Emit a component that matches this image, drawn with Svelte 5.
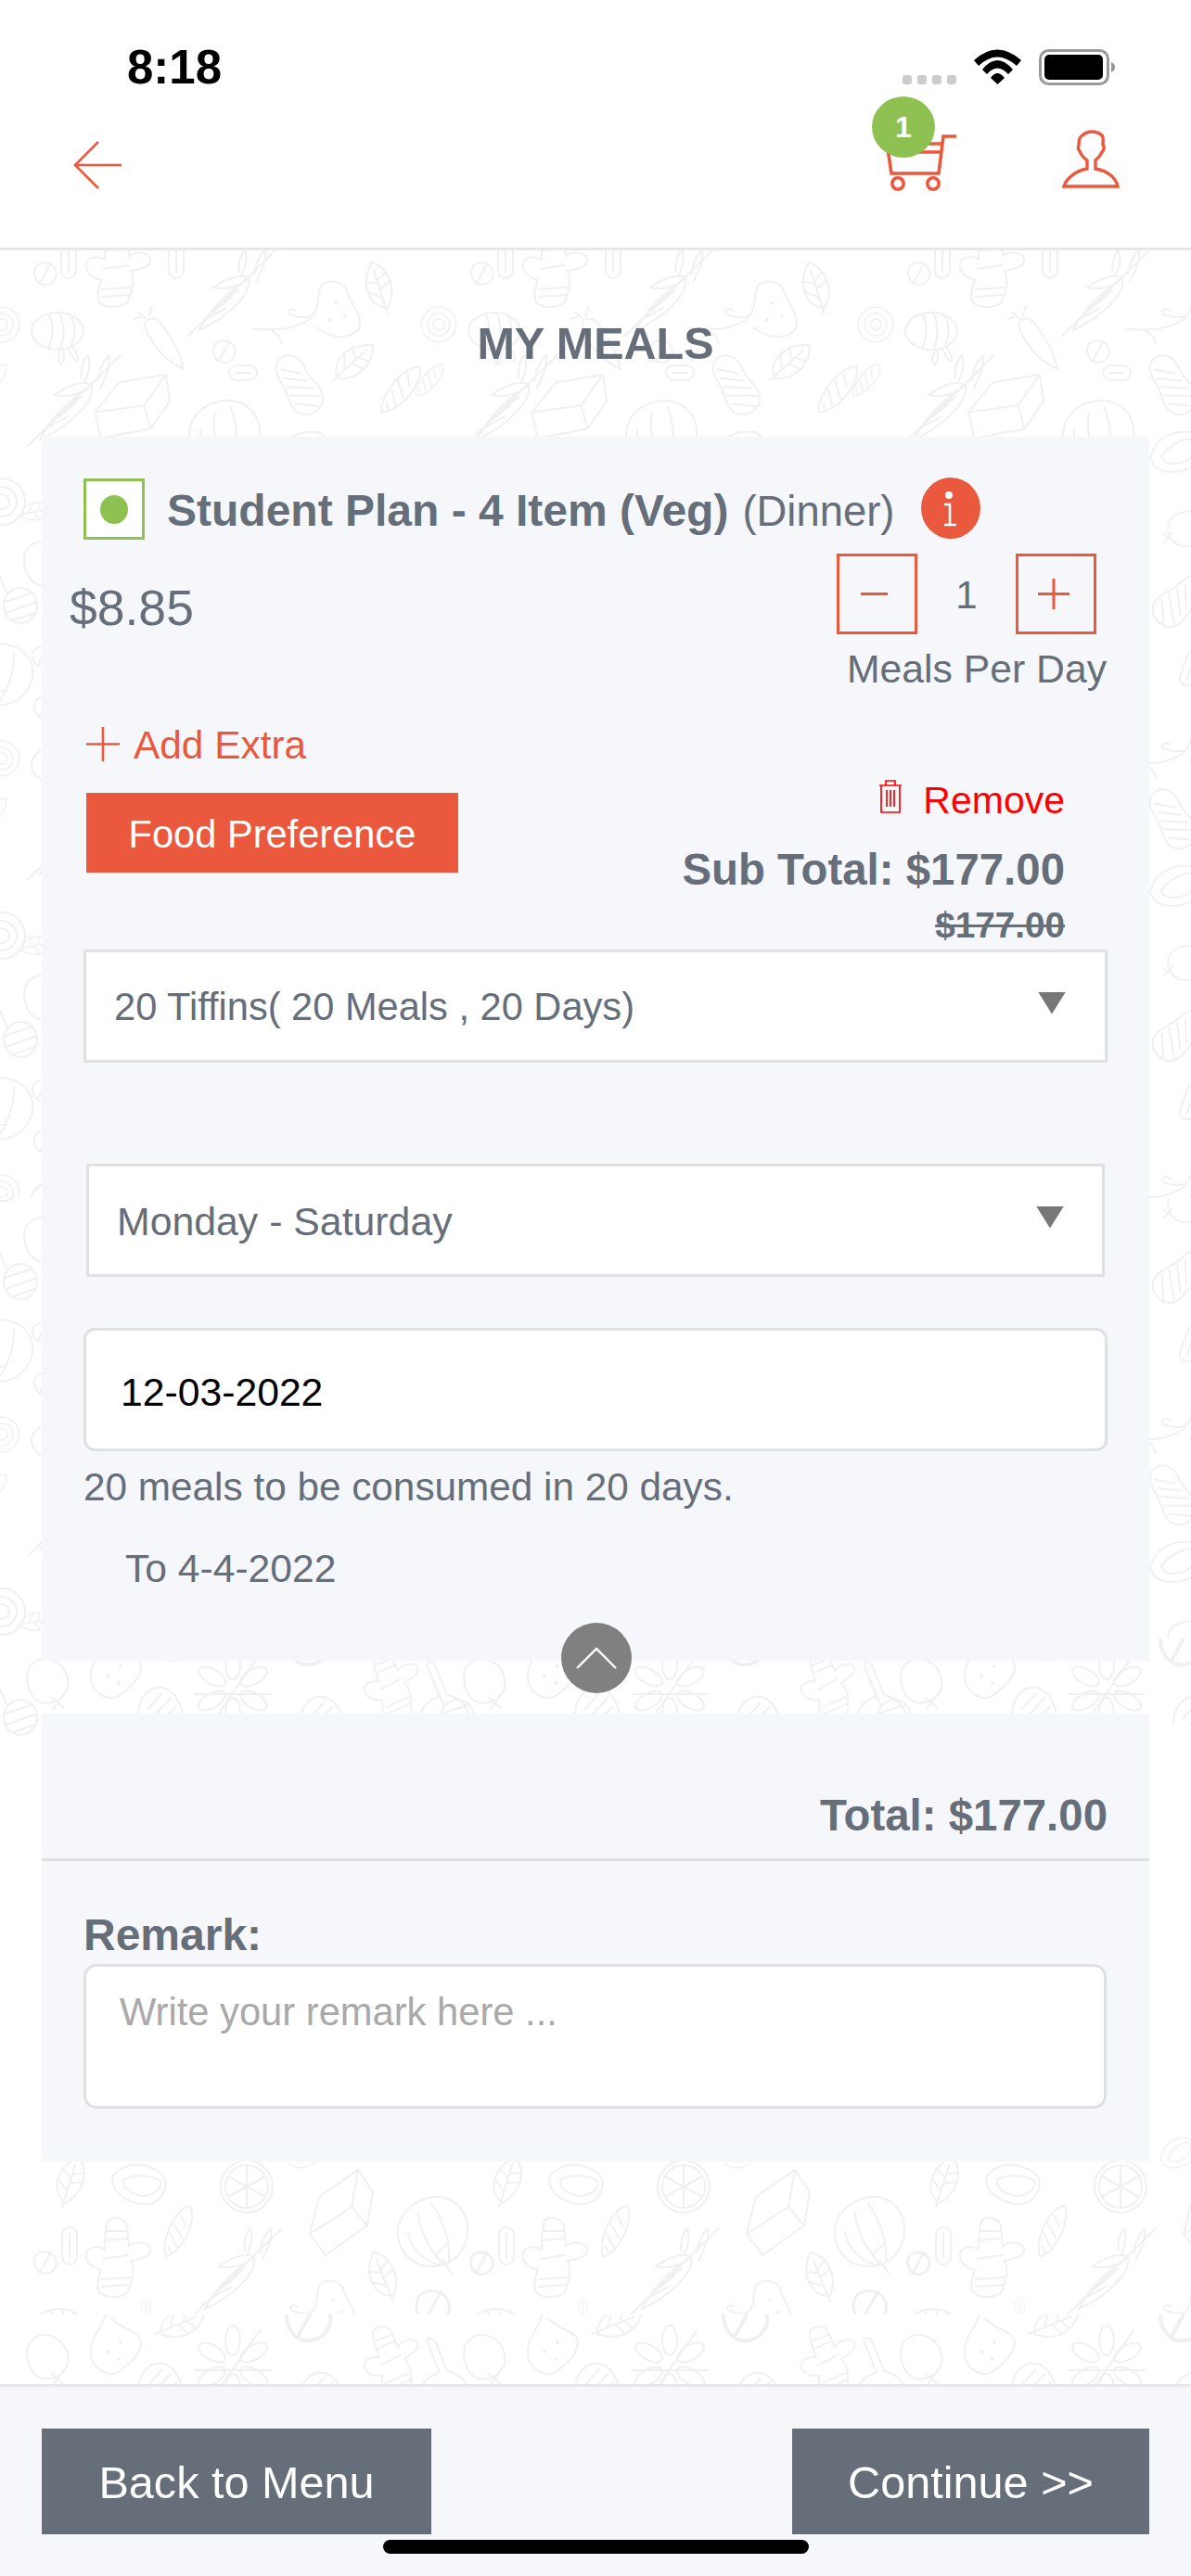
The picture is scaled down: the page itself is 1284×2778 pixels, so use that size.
<script>
  const xs = [-471, 0, 471, 942];
  const tileA = [
    ['ginger',127,292],['round',49,295],['bean',74,280],['bean',190,280],
    ['branch',250,316],['pear',362,335],['leaf',408,310,-15],
    ['striped',62,357],['carrot',176,372],['round',242,379],['pill',262,402],
    ['peanut',320,413,-20],['leaf',380,390,50],
    ['branch',80,432,0,1.05],['box',143,438,25],['pumpkin',242,470],
    ['lens',432,420,40],['lens',-8,410,40,.7],
    ['shell',328,488],['orange2',2,541],['leaf',38,551,80,.7],
    ['fig',48,607],['stem',22,653],['pumpkin',0,728,20,.9],
    ['round',46,708,0,.9],['fig',338,570,90,.85],['peanut',333,645,60],
    ['orange2',2,350,0,.75],['bean',342,720,20]
  ];
  const bottom = [
    ['leaf',546,2352,20],['shell',622,2356,30],['orange',737,2358],['shell',800,2322,-10,.7],
    ['box',839,2386],['pumpkin',938,2408,-15],['round',990,2441],['lens',663,2406,25,.95],
    ['bean',546,2422],['round',520,2440],['ginger',598,2438],
    ['branch',727,2450],['pear',830,2488,0,.9],['leaf',883,2455,-20],
    ['round',938,2488,0,1.5],['striped',535,2510],['leaf',628,2487,0,.4]
  ];
  const flowers = [
    ['fig',522,2541],['potato',595,2530],['leaf',665,2505,70],['flower',722,2550],
    ['acorn',642,2565,0],['acorn',816,2575,0],['round',804,2500,0,2],
    ['ginger',895,2548,-20,.9],['spoon',945,2555]
  ];
  const band = flowers.map(([k, x, y, r = 0, s = 1]) => [k, x, y - 729, r, s]);
  const place = (items, dys) => dys.flatMap((dy) => xs.flatMap((dx) => items.map(([k, x, y, r = 0, s = 1]) => ({
    k: '#' + k,
    t: `translate(${x + dx} ${y + dy}) rotate(${r}) scale(${s})`
  }))));
  const zoneA = place(tileA, [0, 468, 936]);
  const zoneB = place(tileA, [729, 1197]);
  const zoneC = place([...band, ['stem', 22, 1852], ...bottom], [0]);
  const zoneD = place(flowers, [0]);
</script>

<div class="app">
  <header class="top">
    <div class="status">
      <span class="time">8:18</span>
      <svg class="status-icons" viewBox="973 53 230 40" aria-hidden="true">
        <rect x="973" y="81" width="10" height="10" rx="3" fill="#ccc"/>
        <rect x="989" y="81" width="10" height="10" rx="3" fill="#ccc"/>
        <rect x="1005" y="81" width="10" height="10" rx="3" fill="#ccc"/>
        <rect x="1021" y="81" width="10" height="10" rx="3" fill="#ccc"/>
        <path d="M1050 65Q1075 42 1101 65L1096 71Q1075 52 1055 71Z"/>
        <path d="M1059 75Q1075 55 1092 75L1087 80Q1075 67 1064 80Z"/>
        <path d="M1068 84Q1075 74 1083 84L1075.5 91Z"/>
        <rect x="1121.5" y="54.5" width="73" height="36" rx="9" fill="none" stroke="#999" stroke-width="3"/>
        <rect x="1126" y="59" width="63" height="27" rx="5"/>
        <path d="M1198 67C1201 68 1202 70 1202 72.5C1202 75 1201 77 1198 78Z" fill="#999"/>
      </svg>
    </div>
    <nav class="nav">
      <svg class="back" viewBox="78 150 56 56" aria-hidden="true">
        <path d="M106 153L81 178L106 203M81 178H131"/>
      </svg>
      <div class="cart">
        <svg viewBox="940 104 92 102" aria-hidden="true">
          <path d="M1031 147H1017L1012 187H961L957 160M965 155H1015M965 164H1014"/>
          <circle cx="968" cy="198" r="6.2"/>
          <circle cx="1006" cy="198" r="6.2"/>
        </svg>
        <span class="badge">1</span>
      </div>
      <svg class="user" viewBox="1144 140 64 66" aria-hidden="true">
        <path d="M1147 201C1150 192 1160 184 1172 182V173C1168 170 1165 166 1164 163C1162 161 1162 158 1163 157C1163 150 1164 147 1167 146C1170 143 1174 142 1177 142C1182 142 1186 144 1188 146C1190 148 1189 152 1189 156C1191 159 1190 162 1188 164C1187 167 1184 170 1181 173V182C1193 184 1203 191 1205 201Z"/>
      </svg>
    </nav>
  </header>

  <main class="main">
    <svg class="doodles" viewBox="0 270 1284 2301" aria-hidden="true">
      <defs>
        <clipPath id="c1"><rect x="0" y="270" width="1284" height="1022"/></clipPath>
        <clipPath id="c2"><rect x="0" y="1292" width="1284" height="475"/></clipPath>
        <clipPath id="c3"><rect x="0" y="1767" width="1284" height="729"/></clipPath>
        <clipPath id="c4"><rect x="0" y="2496" width="1284" height="75"/></clipPath>
        <g id="ginger"><path d="M-10 -44C-4 -48 8 -46 10 -38L12 -16C20 -22 34 -20 35 -12C36 -4 24 -2 14 0C18 8 16 20 12 30C12 40 -12 42 -20 34C-24 26 -20 16 -18 10C-28 8 -36 0 -34 -8C-32 -16 -20 -16 -14 -12C-14 -22 -14 -36 -10 -44ZM-12 -32L10 -32M-13 -22L11 -24M-16 -2L12 -6M-18 20L14 18M-18 28L13 26"/></g>
        <g id="round"><path d="M-10 -8C-4 -14 8 -12 11 -4C14 6 6 13 -2 12C-10 11 -15 0 -10 -8ZM-6 10L6 -12"/></g>
        <g id="bean"><rect x="-8" y="-20" width="16" height="40" rx="8"/><path d="M0 -14V14"/></g>
        <g id="lens"><path d="M0 -32C14 -22 16 18 0 32C-14 18 -14 -22 0 -32ZM-6 -18L6 -8M-9 -6L9 6M-8 6L8 18M-3 20L4 26"/></g>
        <g id="branch"><path d="M-48 47L48 -47M-35 40C-22 14 0 -4 18 -16C22 0 -4 26 -35 40ZM18 -16C8 -22 -8 -14 -20 -6C-6 -2 10 -8 18 -16ZM24 -20C26 -34 32 -44 36 -46C38 -34 30 -20 26 -12M8 -22C6 -32 10 -44 14 -46C18 -36 14 -26 10 -18M-28 28L-6 16M-20 20L0 4M-12 12L8 -4"/></g>
        <g id="pear"><path d="M-15 -28C-6 -34 8 -32 12 -22C16 -6 26 0 26 14C26 24 12 30 0 28C-10 26 -16 22 -22 18M-15 -28C-22 -18 -16 -6 -24 4C-30 10 -44 6 -50 4C-54 0 -48 -4 -42 0M-90 20C-70 20 -50 24 -26 8M-70 21C-66 24 -60 26 -58 36"/><circle cx="0" cy="-8" r="1"/><circle cx="10" cy="6" r="1"/><circle cx="-6" cy="10" r="1"/></g>
        <g id="leaf"><path d="M0 -28C16 -18 20 6 4 24C-14 18 -20 -6 0 -28ZM0 -20L2 30M1 -8L12 -14M1 2L14 -4M2 12L-12 2M1 -4L-13 -10"/></g>
        <g id="striped"><ellipse rx="28" ry="20"/><path d="M-10 -19C-4 -8 -4 8 -10 18M2 -20C8 -8 8 8 2 20M14 -17C20 -6 20 6 14 17M4 20C0 28 0 34 4 36C8 32 8 26 6 20M12 18C14 26 18 32 22 32C24 28 18 20 16 16"/></g>
        <g id="carrot"><path d="M-18 -26C-10 -32 -4 -26 0 -20C8 -8 18 6 22 26C8 20 -8 6 -14 -8C-18 -14 -22 -22 -18 -26ZM-18 -28L-28 -36M-16 -30L-12 -42M-24 -30L-32 -28"/></g>
        <g id="pill"><rect x="-15" y="-8" width="30" height="16" rx="8"/><path d="M-8 0H8"/></g>
        <g id="peanut"><path d="M-10 -30C4 -36 14 -24 14 -10C14 0 22 8 22 20C22 34 4 40 -6 34C-16 28 -14 14 -14 4C-14 -4 -22 -22 -10 -30ZM-12 -20L8 -8M-12 -10L12 2M-12 0L16 12M-12 10L20 22M-10 20L14 32"/></g>
        <g id="box"><path d="M-24 -17L18 -46L34 -22L28 14L-17 46L-34 23ZM18 -46L11 -6L28 14M11 -6L-34 23"/></g>
        <g id="pumpkin"><path d="M-38 0C-38 -24 -18 -38 4 -38C26 -38 40 -20 38 0C36 20 20 36 0 36C-20 36 -38 22 -38 0ZM-26 -8C-28 14 -14 30 0 36M-10 -26C-14 -6 -8 18 2 36M6 -32C14 -14 16 14 8 36M2 30L8 48M-4 24L14 14"/></g>
        <g id="shell"><path d="M-30 6C-26 -14 -8 -24 14 -22C28 -18 30 2 20 12C6 24 -24 26 -30 6ZM-18 4C-8 -10 8 -16 18 -14C24 -6 16 6 6 10C-6 14 -16 12 -18 4Z"/></g>
        <g id="orange"><circle r="28"/><circle r="23"/><path d="M0 -23V23M-20 -11L20 11M-20 11L20 -11"/></g>
        <g id="orange2"><circle r="25"/><circle r="16"/><circle r="8"/></g>
        <g id="flower"><ellipse cy="-26" rx="8" ry="16"/><ellipse cy="-26" rx="8" ry="16" transform="rotate(60)"/><ellipse cy="-26" rx="8" ry="16" transform="rotate(120)"/><ellipse cy="-26" rx="8" ry="16" transform="rotate(180)"/><ellipse cy="-26" rx="8" ry="16" transform="rotate(240)"/><ellipse cy="-26" rx="8" ry="16" transform="rotate(300)"/><path d="M-42 6H42M-26 42L30 -38"/></g>
        <g id="fig"><path d="M-22 -4C-22 -18 -8 -26 4 -22C18 -18 24 -4 22 8C18 22 4 26 -6 24C-18 20 -22 6 -22 -4ZM4 18L18 30M18 14L6 32M14 20L22 10"/></g>
        <g id="potato"><path d="M-10 -34C-14 -20 -28 -8 -26 10C-24 26 -6 34 4 28C14 20 28 10 28 -4C26 -18 8 -16 -4 -30"/><circle cx="-8" cy="6" r="1"/><circle cx="6" cy="-4" r="1"/><circle cx="4" cy="14" r="1"/></g>
        <g id="acorn"><path d="M-22 14C-22 -6 -10 -18 4 -16C16 -14 24 0 26 14M-12 8L4 -10M-4 14L14 -6M8 14L20 4"/></g>
        <g id="spoon"><path d="M-14 -32C-10 -36 -6 -32 -4 -28L8 2M-14 -32L0 4M0 4C-10 6 -20 14 -20 24M8 2C20 4 30 14 32 24"/></g>
        <g id="stem"><ellipse cx="0" cy="0" rx="18" ry="19"/><path d="M-14 -12L-28 -44M-17 -4L14 -14M-16 8L18 -4M-8 16L16 8"/></g>
      </defs>
      <g clip-path="url(#c1)">{#each zoneA as d}<use href={d.k} transform={d.t}/>{/each}</g>
      <g clip-path="url(#c2)">{#each zoneB as d}<use href={d.k} transform={d.t}/>{/each}</g>
      <g clip-path="url(#c3)">{#each zoneC as d}<use href={d.k} transform={d.t}/>{/each}</g>
      <g clip-path="url(#c4)">{#each zoneD as d}<use href={d.k} transform={d.t}/>{/each}</g>
    </svg>

    <div class="content">
      <h1 class="page-title">MY MEALS</h1>

      <section class="card plan">
        <div class="plan-title">
          <span class="check"><span class="check-dot"></span></span>
          <span class="plan-name"><b>Student Plan - 4 Item (Veg)</b><span class="meal">(Dinner)</span></span>
          <svg class="info" viewBox="0 0 64 66" aria-hidden="true">
            <ellipse cx="32" cy="33" rx="32" ry="33" fill="#ea583e"/>
            <circle cx="30" cy="19" r="4" fill="#fff"/>
            <path d="M25 29H31V51M25 51H38" fill="none" stroke="#fff" stroke-width="2.6"/>
          </svg>
        </div>

        <div class="price-row">
          <span class="price">$8.85</span>
          <div class="qty">
            <div class="stepper">
              <span class="step"><svg viewBox="0 0 80 80" aria-hidden="true"><path d="M23 40.5H52"/></svg></span>
              <span class="count">1</span>
              <span class="step"><svg viewBox="0 0 80 80" aria-hidden="true"><path d="M21 40.5H55M38 24V57"/></svg></span>
            </div>
            <div class="qty-label">Meals Per Day</div>
          </div>
        </div>

        <div class="actions">
          <div class="actions-left">
            <div class="add-extra">
              <svg viewBox="0 0 36 37" aria-hidden="true"><path d="M0 18.5H36M18 0V37"/></svg>
              <span>Add Extra</span>
            </div>
            <div class="food-btn">Food Preference</div>
          </div>
          <div class="actions-right">
            <div class="remove">
              <svg viewBox="0 0 28 38" aria-hidden="true"><path d="M2 7H26M9 7V2H19V7M4 7V36H24V7M10 12V30M14 12V30M18 12V30"/></svg>
              <span>Remove</span>
            </div>
            <div class="subtotal">Sub Total: $177.00</div>
            <div class="strike">$177.00</div>
          </div>
        </div>

        <div class="select first">
          <span>20 Tiffins( 20 Meals , 20 Days)</span>
          <span class="tri"></span>
        </div>
        <div class="select second">
          <span>Monday - Saturday</span>
          <span class="tri"></span>
        </div>
        <div class="date-input">12-03-2022</div>
        <p class="note">20 meals to be consumed in 20 days.</p>
        <p class="note to">To 4-4-2022</p>

        <span class="toggle">
          <svg viewBox="0 0 76 76" aria-hidden="true"><path d="M17 49L38 28L59 49"/></svg>
        </span>
      </section>

      <section class="card summary">
        <div class="total">Total: $177.00</div>
        <div class="remark-block">
          <div class="remark-label">Remark:</div>
          <div class="remark-box">Write your remark here ...</div>
        </div>
      </section>
    </div>
  </main>

  <footer class="bottom">
    <div class="btn back-btn">Back to Menu</div>
    <div class="btn cont-btn">Continue &gt;&gt;</div>
    <span class="home"></span>
  </footer>
</div>

<style>
  :global(body) { margin: 0; background: #fff; }
  .app {
    position: relative;
    width: 1284px;
    height: 2778px;
    display: flex;
    flex-direction: column;
    font-family: "Liberation Sans", Arial, sans-serif;
    color: #666e79;
    overflow: hidden;
  }

  /* Header */
  .top {
    height: 267px;
    border-bottom: 3px solid #e8e8e8;
    background: #fff;
    position: relative;
    z-index: 2;
    flex: none;
  }
  .status {
    display: flex;
    justify-content: space-between;
    align-items: flex-start;
    padding: 44px 81px 0 137px;
    height: 60px;
  }
  .time { font-size: 51px; line-height: 58px; font-weight: 700; color: #000; }
  .status-icons { width: 230px; height: 40px; margin-top: 9px; }
  .nav {
    display: flex;
    align-items: flex-end;
    height: 102px;
    padding: 0 76px 0 78px;
  }
  .nav svg { display: block; fill: none; stroke: #ea583e; }
  .back { width: 56px; height: 56px; stroke-width: 2.6; }
  .cart { position: relative; width: 92px; height: 102px; margin-left: auto; }
  .cart svg { width: 92px; height: 102px; stroke-width: 3.6; }
  .badge {
    position: absolute;
    left: 0;
    top: 0;
    width: 68px;
    height: 66px;
    border-radius: 50%;
    background: #8fc152;
    color: #fff;
    font-size: 32px;
    font-weight: 700;
    line-height: 66px;
    text-align: center;
  }
  .user { width: 64px; height: 66px; margin-left: 112px; stroke-width: 3.4; }

  /* Main */
  .main { position: relative; flex: 1; background: #fff; }
  .doodles {
    position: absolute;
    left: 0;
    top: 0;
    width: 1284px;
    height: 2301px;
    fill: none;
    stroke: #f0f0f0;
    stroke-width: 2;
    filter: blur(0.7px);
  }
  .content { position: relative; padding: 0 45px; }
  .page-title {
    margin: 0;
    padding: 72px 0 73px;
    font-size: 48.5px;
    line-height: 56px;
    font-weight: 700;
    text-align: center;
  }
  .card { background: #f5f7fb; }
  .plan { position: relative; height: 1320px; padding: 42px 45px 0; box-sizing: border-box; }

  .plan-title { display: flex; align-items: center; height: 69px; }
  .check {
    width: 66px;
    height: 66px;
    box-sizing: border-box;
    border: 3px solid #8fc152;
    display: flex;
    align-items: center;
    justify-content: center;
    background: #fff;
    flex: none;
    margin-top: 3px;
  }
  .check-dot { width: 30px; height: 31px; border-radius: 50%; background: #8fc152; }
  .plan-name { margin-left: 24px; font-size: 48px; line-height: 56px; white-space: nowrap; padding-top: 7px; }
  .plan-name b { font-weight: 700; }
  .meal { font-size: 45.4px; margin-left: 15px; }
  .info { width: 64px; height: 66px; margin-left: 29px; flex: none; }

  .price-row { display: flex; justify-content: space-between; margin-top: 15px; }
  .price { font-size: 53.5px; line-height: 62px; margin: 28px 0 0 -15px; }
  .qty { width: 291px; margin-right: 1px; }
  .stepper { display: flex; justify-content: space-between; align-items: center; width: 280px; height: 87px; }
  .step {
    width: 87px;
    height: 87px;
    box-sizing: border-box;
    border: 3.5px solid #ea583e;
    display: block;
  }
  .step svg { display: block; width: 80px; height: 80px; fill: none; stroke: #ea583e; stroke-width: 3; }
  .count { font-size: 42px; line-height: 84px; padding-top: 3px; }
  .qty-label { margin-top: 12px; font-size: 42.7px; line-height: 50px; text-align: right; white-space: nowrap; }

  .actions { display: flex; justify-content: space-between; height: 278px; }
  .add-extra {
    display: flex;
    align-items: center;
    gap: 15px;
    margin: 33px 0 0 3px;
    height: 50px;
    color: #ea583e;
    font-size: 42.4px;
    line-height: 50px;
  }
  .add-extra svg { width: 36px; height: 37px; fill: none; stroke: #ea583e; stroke-width: 2.6; margin-top: -3px; }
  .food-btn {
    margin: 26px 0 0 3px;
    width: 401px;
    height: 86px;
    background: #ea583e;
    color: #fff;
    font-size: 41.6px;
    line-height: 89px;
    text-align: center;
  }
  .actions-right { display: flex; flex-direction: column; align-items: flex-end; padding-right: 46px; }
  .remove {
    display: flex;
    align-items: center;
    gap: 21px;
    margin-top: 92px;
    height: 50px;
    color: #f00;
    font-size: 41px;
    line-height: 50px;
  }
  .remove svg { width: 28px; height: 38px; fill: none; stroke: #f00; stroke-width: 1.7; margin-top: -9px; }
  .subtotal { margin-top: 22px; font-size: 47.4px; line-height: 56px; font-weight: 700; white-space: nowrap; }
  .strike { margin-top: 9px; font-size: 38.7px; line-height: 46px; font-weight: 700; text-decoration: line-through; }

  .select {
    display: flex;
    align-items: center;
    justify-content: space-between;
    height: 122px;
    box-sizing: border-box;
    border: 3px solid #dfe0e2;
    background: #fff;
    line-height: 50px;
    padding: 2px 42px 0 30px;
  }
  .select.first { font-size: 41.6px; }
  .select.second { margin: 109px 3px 0; padding-right: 41px; font-size: 42.8px; }
  .tri {
    width: 30px;
    height: 24px;
    background: #777;
    clip-path: polygon(0 0, 100% 0, 50% 100%);
    margin-top: -9px;
  }
  .date-input {
    margin-top: 55px;
    height: 133px;
    box-sizing: border-box;
    border: 3px solid #dfe0e2;
    border-radius: 12px;
    background: #fff;
    color: #000;
    font-size: 42.7px;
    line-height: 50px;
    padding: 41px 37px 0;
  }
  .note { margin: 14px 0 0; font-size: 42.3px; line-height: 50px; white-space: nowrap; }
  .note.to { margin: 37px 0 0 45px; font-size: 42.6px; }

  .toggle {
    position: absolute;
    left: 560px;
    top: 1279px;
    width: 76px;
    height: 76px;
    border-radius: 50%;
    background: #808080;
  }
  .toggle svg { display: block; width: 76px; height: 76px; fill: none; stroke: #fff; stroke-width: 2.4; }

  .summary { margin-top: 57px; height: 483px; }
  .total {
    padding: 82px 45px 18px 0;
    font-size: 47.4px;
    line-height: 56px;
    font-weight: 700;
    text-align: right;
    border-bottom: 3px solid #dfe0e2;
  }
  .remark-block { padding: 52px 46px 0 45px; }
  .remark-label { font-size: 48px; line-height: 56px; font-weight: 700; }
  .remark-box {
    margin-top: 3px;
    height: 156px;
    box-sizing: border-box;
    border: 3px solid #dfe0e2;
    border-radius: 14px;
    background: #fff;
    color: #a9a9a9;
    font-size: 41.7px;
    line-height: 50px;
    padding: 24px 36px 0;
  }

  /* Footer */
  .bottom {
    position: relative;
    flex: none;
    height: 207px;
    box-sizing: border-box;
    border-top: 3px solid #e8e8e8;
    background: #f5f7fb;
    display: flex;
    justify-content: space-between;
    align-items: flex-start;
    padding: 45px 45px 0;
  }
  .btn {
    height: 114px;
    background: #666e79;
    color: #fff;
    font-size: 48.6px;
    line-height: 116px;
    text-align: center;
  }
  .back-btn { width: 420px; }
  .cont-btn { width: 385px; }
  .home {
    position: absolute;
    left: 413px;
    top: 165px;
    width: 459px;
    height: 15px;
    border-radius: 8px;
    background: #000;
  }
</style>
